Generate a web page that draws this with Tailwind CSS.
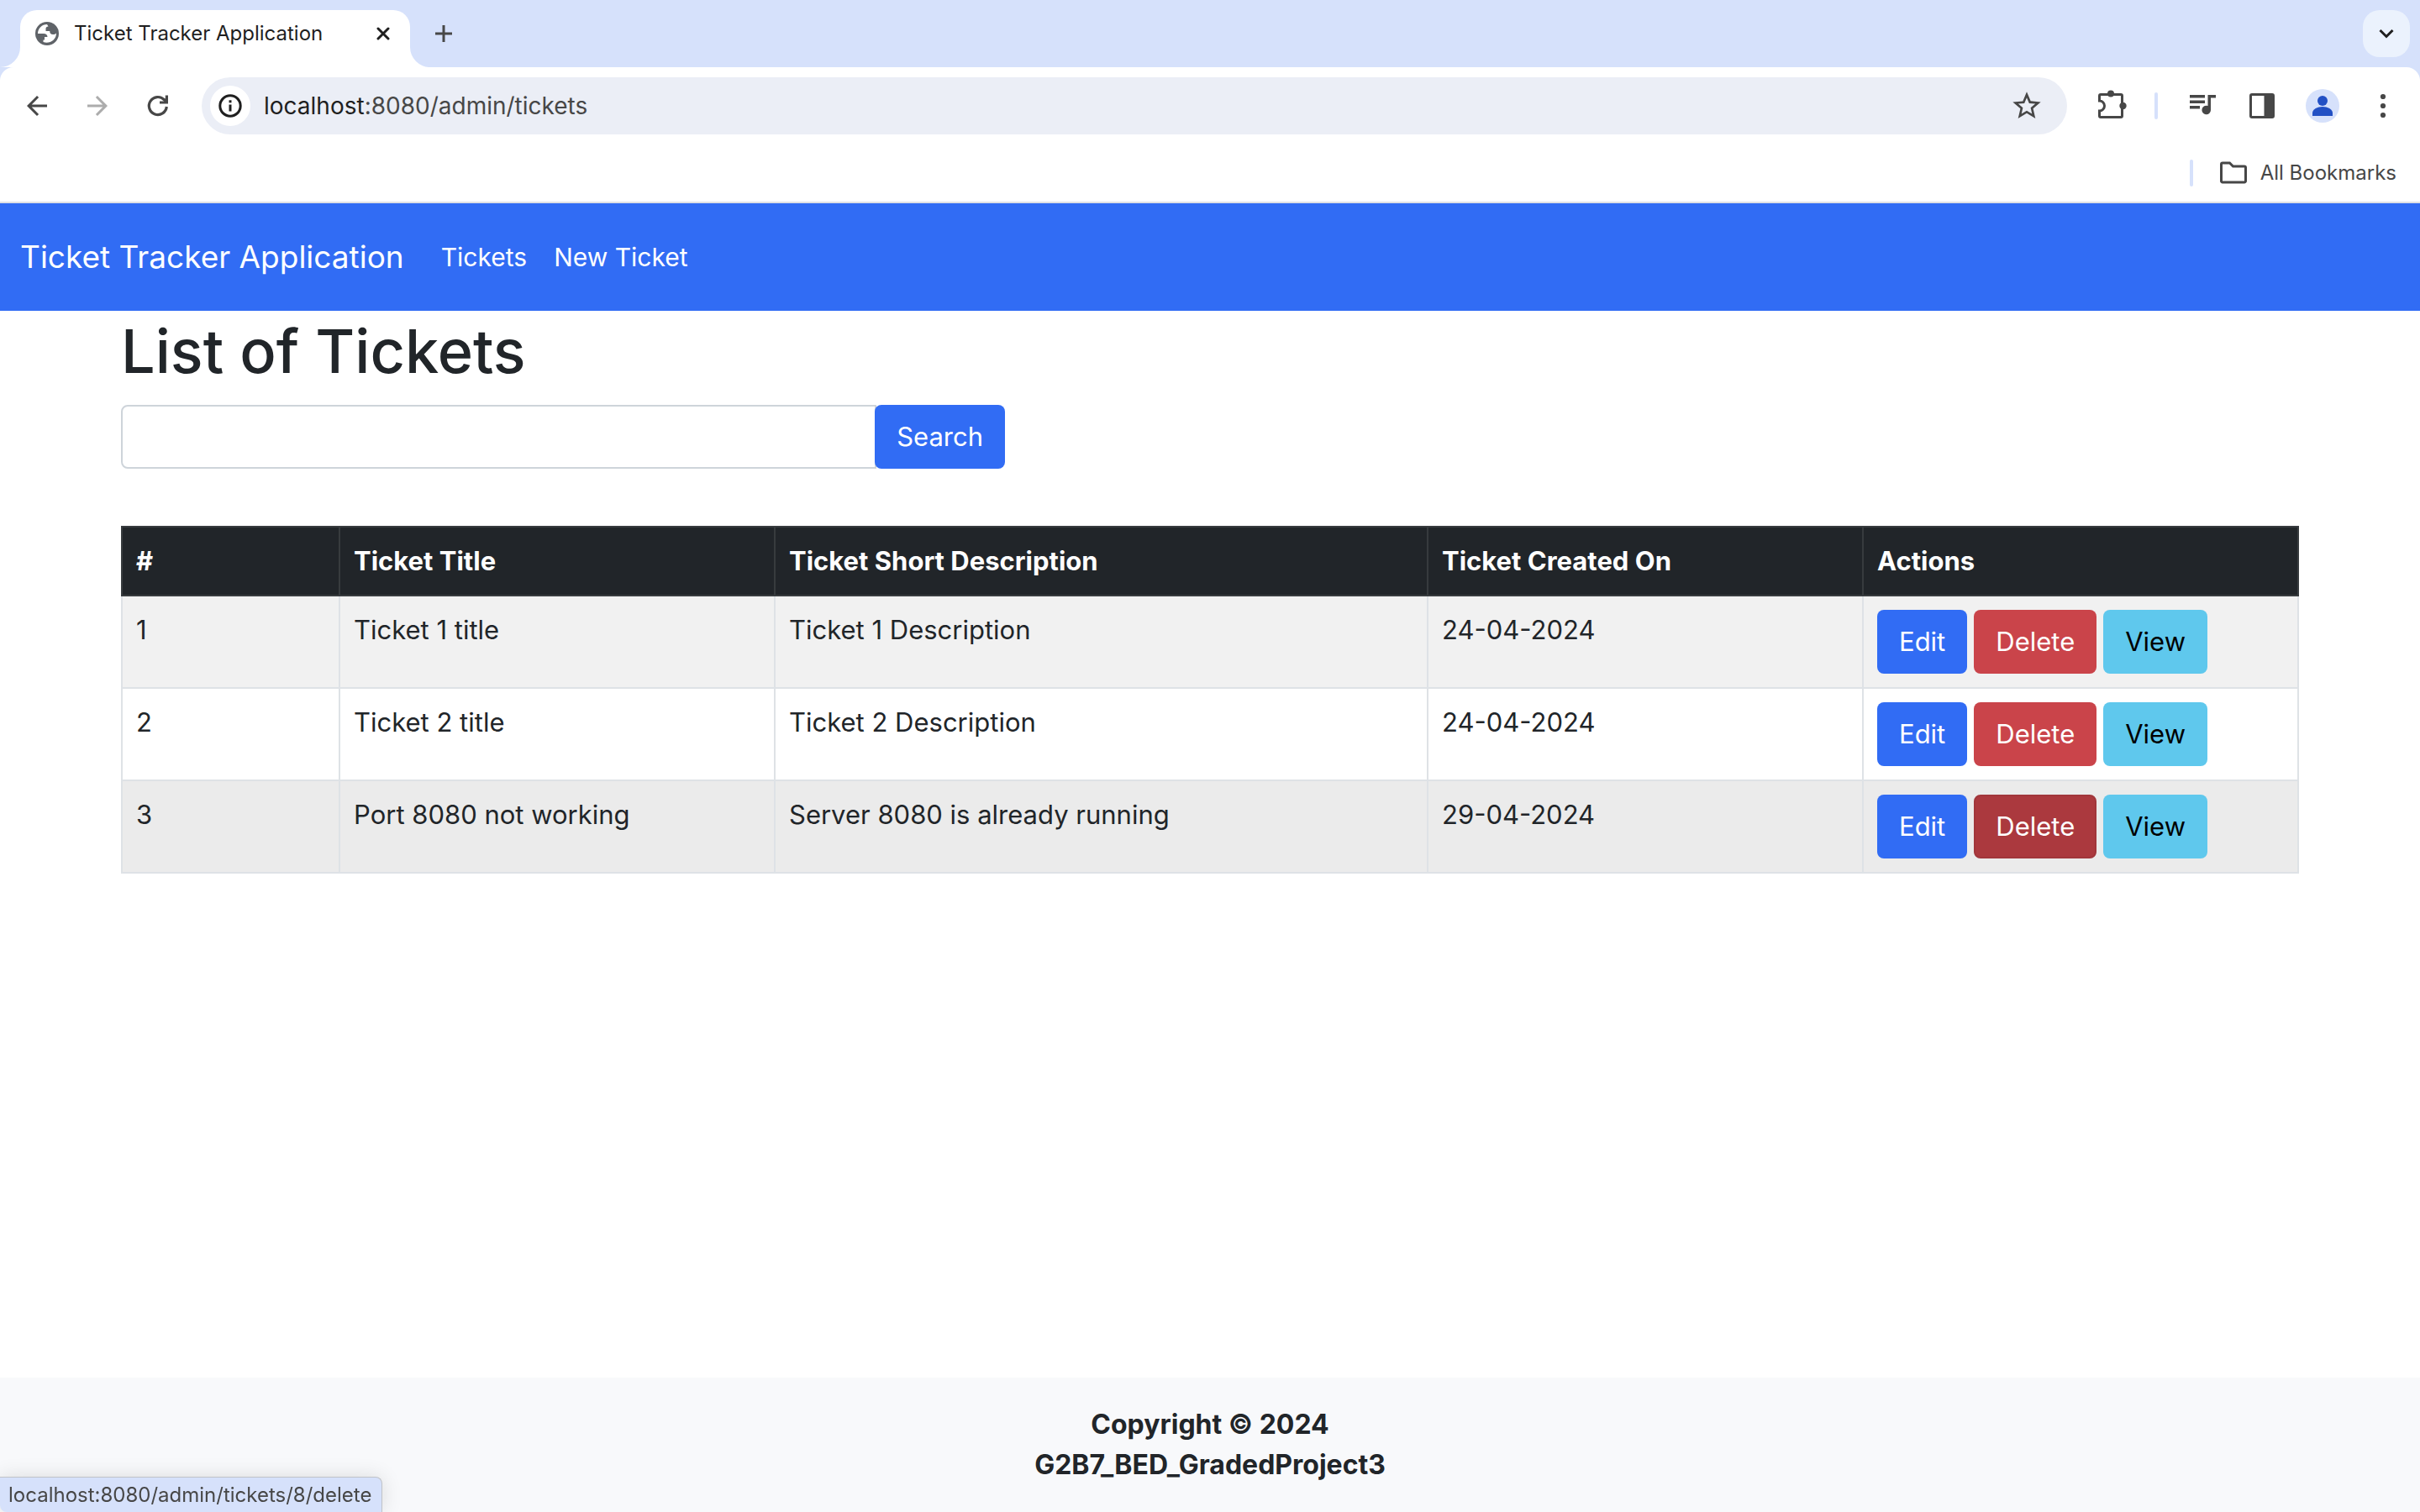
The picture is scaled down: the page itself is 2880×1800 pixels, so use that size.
<!DOCTYPE html>
<html lang="en">
<head>
<meta charset="utf-8">
<meta name="viewport" content="width=device-width, initial-scale=1">
<title>Ticket Tracker Application</title>
<script src="https://cdn.jsdelivr.net/npm/@tailwindcss/browser@4"></script>
</head>
<body class="flex min-h-screen flex-col bg-white font-['Inter','Liberation_Sans',sans-serif] text-[31px] leading-[48px] text-[#212529]">

<!-- Browser window frame -->
<div class="bg-[#d6e1fb]">
  <div class="flex h-20 items-end pr-3 pl-6">
    <div class="relative flex h-17 w-116 items-center rounded-t-[20px] bg-white pr-5 pb-3 pl-[18px] text-2xl text-[#1f1f1f]">
      <svg class="absolute bottom-0 -left-6 size-6" viewBox="0 0 24 24" fill="#fff" aria-hidden="true"><path d="M24 0v24H0A24 24 0 0 0 24 0z"/></svg>
      <svg class="absolute -right-6 bottom-0 size-6" viewBox="0 0 24 24" fill="#fff" aria-hidden="true"><path d="M0 0v24h24A24 24 0 0 1 0 0z"/></svg>
      <svg class="size-7 shrink-0" viewBox="0 0 28 28" aria-hidden="true">
        <circle cx="14" cy="14" r="14" fill="#5f6368"/>
        <path fill="#fff" d="M14 3C8 3 3 7.800 3 14h7c2.500 0 4.500 1.200 4.500 4h-3.500v3.500H9.500v2.500C16.500 26.500 25 22 25 13.500c-1 1-2.500 1.500-4 1.500-2.500 0-3.800-1.500-3.800-4H12.500V8c0-1.500 1.200-2.500 3-2.500z"/>
      </svg>
      <span class="ml-[18px] flex-1 whitespace-nowrap">Ticket Tracker Application</span>
      <button aria-label="Close tab" class="flex size-6 items-center justify-center">
        <svg class="size-4" viewBox="0 0 16 16" fill="none" stroke="#1f1f1f" stroke-width="3" stroke-linecap="round"><path d="M2 2l12 12M14 2L2 14"/></svg>
      </button>
    </div>
    <button aria-label="New tab" class="mb-3 ml-3 flex size-14 items-center justify-center rounded-full">
      <svg class="size-5" viewBox="0 0 20 20" fill="none" stroke="#474747" stroke-width="3"><path d="M10 0v20M0 10h20"/></svg>
    </button>
    <button aria-label="Search tabs" class="mb-3 ml-auto flex size-14 items-center justify-center rounded-[20px] bg-[#ebf2fd]">
      <svg class="size-5" viewBox="0 0 20 20" fill="none" stroke="#1f1f1f" stroke-width="3"><path d="M2.500 6l7.500 7.500L17.500 6"/></svg>
    </button>
  </div>

  <div class="rounded-t-2xl border-b-2 border-[#dfe1e5] bg-white">
    <div class="flex h-23 items-center gap-6 px-4">
      <div class="flex gap-4">
        <button aria-label="Back" class="flex size-14 items-center justify-center">
          <svg class="size-9" viewBox="0 0 24 24" fill="#474747"><path d="M20 11H7.830l5.590-5.590L12 4l-8 8 8 8 1.410-1.410L7.830 13H20z"/></svg>
        </button>
        <button aria-label="Forward" class="flex size-14 items-center justify-center">
          <svg class="size-9" viewBox="0 0 24 24" fill="#acacac"><path d="M4 11h12.170l-5.590-5.590L12 4l8 8-8 8-1.410-1.410L16.170 13H4z"/></svg>
        </button>
        <button aria-label="Reload" class="flex size-14 items-center justify-center">
          <svg class="size-7" viewBox="0 0 28 28" fill="none" stroke="#474747" stroke-width="3.200"><path d="M24.300 15A10.500 10.500 0 1 1 21.500 6.800L24 9.500"/><path d="M24.400 1.500V10H16"/><path d="M20 5.500h4.500V10z" fill="#474747" stroke="none"/></svg>
        </button>
      </div>
      <div class="flex h-17 flex-1 items-center rounded-full bg-[#ebeef6] pr-7 pl-[10px]">
        <button aria-label="View site information" class="flex size-12 items-center justify-center rounded-full bg-white">
          <svg class="size-7" viewBox="0 0 28 28" fill="none" stroke="#1f1f1f"><circle cx="14" cy="14" r="12.200" stroke-width="3"/><path d="M14 12.500v8" stroke-width="3"/><path d="M14 7.300v3" stroke-width="3"/></svg>
        </button>
        <a href="#" class="ml-4 flex-1 text-[28px] text-[#474747]"><span class="text-[#1f1f1f]">localhost</span>:8080/admin/tickets</a>
        <button aria-label="Bookmark this tab" class="flex size-10 items-center justify-center">
          <svg class="size-10" viewBox="0 0 24 24" fill="#474747"><path d="M22 9.240l-7.190-.62L12 2 9.190 8.630 2 9.240l5.460 4.730L5.820 21 12 17.270 18.180 21l-1.630-7.030L22 9.240zM12 15.400l-3.760 2.270 1-4.280-3.320-2.880 4.380-.38L12 6.100l1.710 4.040 4.380.38-3.320 2.880 1 4.280L12 15.400z"/></svg>
        </button>
      </div>
      <button aria-label="Extensions" class="flex size-14 items-center justify-center">
        <svg class="size-10" viewBox="0 0 40 40"><path d="M6.500 14V8a1.500 1.500 0 0 1 1.500-1.500h24A1.500 1.500 0 0 1 33.500 8v24a1.500 1.500 0 0 1-1.500 1.500H8A1.500 1.500 0 0 1 6.500 32v-6a6 6 0 0 0 0-12z" fill="none" stroke="#474747" stroke-width="3"/><circle cx="20" cy="5.500" r="4" fill="#474747"/><circle cx="34.500" cy="20" r="4.200" fill="#474747"/></svg>
      </button>
      <div class="h-8 w-1 rounded-full bg-[#d6e1fb]"></div>
      <div class="flex gap-4">
        <button aria-label="Media controls" class="flex size-14 items-center justify-center">
          <svg class="size-9" viewBox="0 0 36 36" fill="#474747"><path d="M4 5h18v3.500H4zM4 11.500h18V15H4zM4 18h12v3.500H4zM25.500 5H35v3.500h-6V23a5.300 5.300 0 1 1-3.500-5z"/></svg>
        </button>
        <button aria-label="Side panel" class="flex size-14 items-center justify-center">
          <svg class="size-[30px]" viewBox="0 0 30 30"><rect x="1.500" y="1.500" width="27" height="27" rx="1.500" fill="none" stroke="#474747" stroke-width="3"/><path d="M17.500 2H28v26H17.500z" fill="#474747"/></svg>
        </button>
        <button aria-label="Profile" class="flex size-14 items-center justify-center">
          <svg class="size-10" viewBox="0 0 40 40"><circle cx="20" cy="20" r="20" fill="#d6e1fb"/><circle cx="20" cy="14" r="6" fill="#2250c4"/><path d="M8 32v-3.500c0-4.500 6-7.500 12-7.500s12 3 12 7.500V32z" fill="#2250c4"/></svg>
        </button>
        <button aria-label="Menu" class="flex size-14 items-center justify-center">
          <svg class="size-8" viewBox="0 0 32 32" fill="#474747"><circle cx="16" cy="5" r="3.100"/><circle cx="16" cy="16" r="3.100"/><circle cx="16" cy="27" r="3.100"/></svg>
        </button>
      </div>
    </div>
    <div class="flex h-17 items-center justify-end pr-7">
      <div class="h-8 w-1 rounded-full bg-[#d6e1fb]"></div>
      <button class="ml-7 flex items-center gap-3 text-2xl text-[#474747]">
        <svg class="size-10" viewBox="0 0 40 40" fill="none" stroke="#474747" stroke-width="3"><path d="M5.500 9.500a1.500 1.500 0 0 1 1.500-1.500h8.500l4 4H33a1.500 1.500 0 0 1 1.500 1.500V29.500A1.500 1.500 0 0 1 33 31H7a1.500 1.500 0 0 1-1.500-1.500z"/></svg>
        All Bookmarks
      </button>
    </div>
  </div>
</div>

<!-- Application -->
<nav class="flex h-32 items-center gap-7 bg-[#316cf4] px-6 text-white">
  <a href="#" class="text-[37px]">Ticket Tracker Application</a>
  <div class="flex text-3xl">
    <a href="#" class="px-4">Tickets</a>
    <a href="#" class="px-4">New Ticket</a>
  </div>
</nav>

<main class="mx-auto w-9/10 flex-1">
  <h1 class="mb-4 text-7xl leading-24 font-medium">List of Tickets</h1>
  <form class="flex w-[1052px]">
    <input type="text" aria-label="Search tickets" class="h-19 min-w-0 flex-1 rounded-l-lg border-2 border-[#ced4da] bg-white px-6">
    <button type="button" class="-ml-0.5 h-19 rounded-lg bg-[#316cf4] px-[26px] text-white">Search</button>
  </form>

  <table class="mt-17 w-full table-fixed border-collapse text-left">
    <colgroup><col class="w-1/10"><col class="w-2/10"><col class="w-3/10"><col class="w-2/10"><col class="w-2/10"></colgroup>
    <thead class="bg-[#212529] text-white">
      <tr>
        <th class="border-2 border-[#373b3e] p-4">#</th>
        <th class="border-2 border-[#373b3e] p-4">Ticket Title</th>
        <th class="border-2 border-[#373b3e] p-4">Ticket Short Description</th>
        <th class="border-2 border-[#373b3e] p-4">Ticket Created On</th>
        <th class="border-2 border-[#373b3e] p-4">Actions</th>
      </tr>
    </thead>
    <tbody class="align-top">
      <tr class="bg-[#f1f1f1]">
        <td class="border-2 border-[#dee2e6] p-4">1</td>
        <td class="border-2 border-[#dee2e6] p-4">Ticket 1 title</td>
        <td class="border-2 border-[#dee2e6] p-4">Ticket 1 Description</td>
        <td class="border-2 border-[#dee2e6] p-4">24-04-2024</td>
        <td class="border-2 border-[#dee2e6] p-4">
          <div class="flex gap-2">
            <a href="#" class="rounded-lg bg-[#316cf4] px-[26px] py-[14px] text-white">Edit</a>
            <a href="#" class="rounded-lg bg-[#ca444a] px-[26px] py-[14px] text-white">Delete</a>
            <a href="#" class="rounded-lg bg-[#5fc8ed] px-[26px] py-[14px] text-black">View</a>
          </div>
        </td>
      </tr>
      <tr>
        <td class="border-2 border-[#dee2e6] p-4">2</td>
        <td class="border-2 border-[#dee2e6] p-4">Ticket 2 title</td>
        <td class="border-2 border-[#dee2e6] p-4">Ticket 2 Description</td>
        <td class="border-2 border-[#dee2e6] p-4">24-04-2024</td>
        <td class="border-2 border-[#dee2e6] p-4">
          <div class="flex gap-2">
            <a href="#" class="rounded-lg bg-[#316cf4] px-[26px] py-[14px] text-white">Edit</a>
            <a href="#" class="rounded-lg bg-[#ca444a] px-[26px] py-[14px] text-white">Delete</a>
            <a href="#" class="rounded-lg bg-[#5fc8ed] px-[26px] py-[14px] text-black">View</a>
          </div>
        </td>
      </tr>
      <tr class="bg-[#ebebeb]">
        <td class="border-2 border-[#dee2e6] p-4">3</td>
        <td class="border-2 border-[#dee2e6] p-4">Port 8080 not working</td>
        <td class="border-2 border-[#dee2e6] p-4">Server 8080 is already running</td>
        <td class="border-2 border-[#dee2e6] p-4">29-04-2024</td>
        <td class="border-2 border-[#dee2e6] p-4">
          <div class="flex gap-2">
            <a href="#" class="rounded-lg bg-[#316cf4] px-[26px] py-[14px] text-white">Edit</a>
            <a href="#" class="rounded-lg border-2 border-[#a1363b] bg-[#ab393e] px-6 py-3 text-white">Delete</a>
            <a href="#" class="rounded-lg bg-[#5fc8ed] px-[26px] py-[14px] text-black">View</a>
          </div>
        </td>
      </tr>
    </tbody>
  </table>
</main>

<footer class="bg-[#f8f9fb] py-8 text-center text-[32px] leading-[48px] font-bold">
  <p>Copyright © 2024</p>
  <p>G2B7_BED_GradedProject3</p>
</footer>

<!-- Link status bubble -->
<div class="fixed bottom-0 left-0 flex h-[42px] items-center rounded-tr-lg rounded-bl-lg border-t border-r border-[#c0c3c8] bg-[#d6e1fb] pr-3 pl-[10px] text-2xl text-[#474747] shadow-[0_0_24px_rgba(0,0,0,0.12)]">localhost:8080/admin/tickets/8/delete</div>
</body>
</html>
